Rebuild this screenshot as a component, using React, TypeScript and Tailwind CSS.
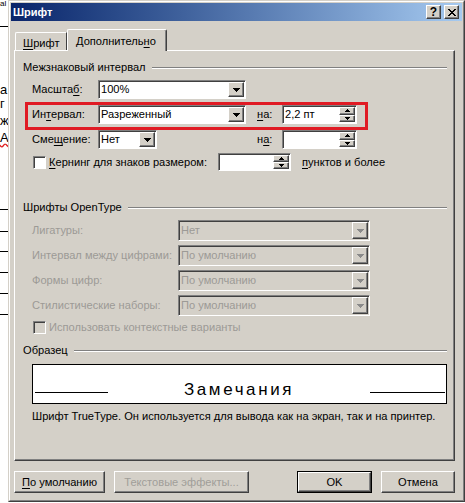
import React from 'react'

const raised =
  "bg-[#d4d0c8] border border-t-white border-l-white border-r-[#404040] border-b-[#404040] shadow-[inset_-1px_-1px_0_#808080]";
const sunken =
  "border border-t-[#808080] border-l-[#808080] border-r-white border-b-white shadow-[inset_1px_1px_0_#404040]";

const Down = ({color = "#000"}: {color?: string}) => (
  <svg width="7" height="4" viewBox="0 0 7 4" shapeRendering="crispEdges">
    <path d="M0 0h7v1H0zM1 1h5v1H1zM2 2h3v1H2zM3 3h1v1H3z" fill={color} />
  </svg>
)

const Up = () => (
  <svg width="5" height="3" viewBox="0 0 5 3" shapeRendering="crispEdges">
    <path d="M2 0h1v1H2zM1 1h3v1H1zM0 2h5v1H0z" fill="#000" />
  </svg>
)

const SmallDown = () => (
  <svg width="5" height="3" viewBox="0 0 5 3" shapeRendering="crispEdges">
    <path d="M0 0h5v1H0zM1 1h3v1H1zM2 2h1v1H2z" fill="#000" />
  </svg>
)

const Select = ({className, value, disabled}: {className: string; value: string; disabled?: boolean}) => (
  <div className={`${sunken} ${className} h-full p-[1px] flex ${disabled ? "bg-[#d4d0c8] text-[#9c9a96]" : "bg-white"}`}>
    <div className="flex-1 flex items-center pl-[1px] whitespace-nowrap overflow-hidden">{value}</div>
    <div className={`${raised} w-[16px] flex items-center justify-center`}>
      <Down color={disabled ? "#8a8a8a" : "#000"} />
    </div>
  </div>
)

const Spin = ({className, value}: {className: string; value?: string}) => (
  <div className={`${sunken} ${className} h-full p-[1px] flex bg-white`}>
    <div className="flex-1 flex items-center pl-[1px]">{value}</div>
    <div className="w-[16px] flex flex-col">
      <div className={`${raised} flex-1 flex items-center justify-center`}>
        <Up />
      </div>
      <div className={`${raised} flex-1 flex items-center justify-center`}>
        <SmallDown />
      </div>
    </div>
  </div>
)

const Section = ({title, className}: {title: string; className: string}) => (
  <div className={`flex items-center h-[13px] pl-[8px] pr-[7px] ${className}`}>
    <span className="whitespace-nowrap">{title}</span>
    <div className="flex-1 ml-[6px] border-t border-t-[#808080] border-b border-b-white" />
  </div>
)

const Check = ({disabled}: {disabled?: boolean}) => (
  <div className={`${sunken} w-[13px] h-[13px] ${disabled ? "bg-[#d4d0c8]" : "bg-white"}`} />
)

const u = "underline underline-offset-[2px] decoration-1"

export default function App() {
  return (
    <div className="w-[465px] h-[503px] flex bg-white overflow-hidden text-[11.1px] leading-[13px] text-black font-['Liberation_Sans',Arial,sans-serif]">
      {/* strip of the document behind the dialog */}
      <div className="w-[8px] shrink-0 flex flex-col overflow-hidden text-[13px] leading-[13px]">
        <div className="h-[7px] text-[8px] leading-[7px] whitespace-nowrap">аl</div>
        <div className="mt-[19px] h-px bg-black" />
        <div className="mt-[56px] h-[13px]">а</div>
        <div className="mt-[1px] h-[13px]">г</div>
        <div className="mt-[4px] h-[13px]">ж</div>
        <div className="mt-[4px] h-[13px] underline decoration-wavy decoration-[#e02020]">А</div>
        <div className="mt-[65px] h-px bg-black" />
        <div className="mt-[21px] h-px bg-black" />
        <div className="mt-[19px] h-px bg-black" />
        <div className="mt-[20px] h-px bg-black" />
        <div className="mt-[20px] h-px bg-black" />
        <div className="mt-[20px] h-px bg-black" />
      </div>

      {/* dialog */}
      <div className="w-[457px] h-[502px] shrink-0 border border-t-[#d4d0c8] border-l-[#d4d0c8] border-r-[#404040] border-b-[#404040] bg-[#d4d0c8]">
        <div className="h-full border border-t-white border-l-white border-r-[#808080] border-b-[#808080] p-[1px] flex flex-col">
          {/* title bar */}
          <div className="h-[18px] bg-linear-to-r from-[#0a246a] to-[#a6caf0] flex items-center pl-[2px] pr-[3px]">
            <span className="font-bold text-white text-[11px]">Шрифт</span>
            <div className="ml-auto flex gap-[3px]">
              <div className={`${raised} w-[15px] h-[14px] flex items-center justify-center font-bold text-[12px] leading-[12px]`}>?</div>
              <div className={`${raised} w-[15px] h-[14px] flex items-center justify-center`}>
                <svg width="8" height="7" viewBox="0 0 8 7" shapeRendering="crispEdges">
                  <path d="M0 0h2v1H0zM6 0h2v1H6zM1 1h2v1H1zM5 1h2v1H5zM2 2h4v1H2zM3 3h2v1H3zM2 4h4v1H2zM1 5h2v1H1zM5 5h2v1H5zM0 6h2v1H0zM6 6h2v1H6z" fill="#000" />
                </svg>
              </div>
            </div>
          </div>

          {/* tabs */}
          <div className="h-[29px] flex items-end pl-[4px] relative z-10">
            <div className="w-[52px] h-[18px] border-t border-l border-t-white border-l-white border-r border-r-[#404040] rounded-tl-[2px] pl-[7px] pt-[4px]">
              <u className={u}>Ш</u>рифт
            </div>
            <div className="w-[100px] h-[22px] -mb-[1px] bg-[#d4d0c8] border-t border-l border-t-white border-l-white border-r border-r-[#404040] shadow-[inset_-1px_0_0_#808080] rounded-tl-[2px] rounded-tr-[2px] pl-[8px] pt-[5px]">
              Дополнитель<u className={u}>н</u>о
            </div>
          </div>

          {/* panel */}
          <div className="ml-[3px] w-[441px] h-[411px] relative border border-t-white border-l-white border-r-[#404040] border-b-[#404040] shadow-[inset_-1px_-1px_0_#808080] flex flex-col">
            <Section title="Межзнаковый интервал" className="mt-[10px]" />

            <div className="flex items-center h-[19px] mt-[6px] pl-[17px]">
              <span className="w-[66px]">Масшта<u className={u}>б</u>:</span>
              <Select className="w-[148px]" value="100%" />
            </div>

            <div className="flex items-center h-[19px] mt-[6px] pl-[17px]">
              <span className="w-[66px]">Ин<u className={u}>т</u>ервал:</span>
              <Select className="w-[148px]" value="Разреженный" />
              <span className="ml-[11px] w-[25px]"><u className={u}>н</u>а:</span>
              <Spin className="w-[75px]" value="2,2 пт" />
            </div>

            <div className="flex items-center h-[19px] mt-[6px] pl-[17px]">
              <span className="w-[66px]">Сме<u className={u}>щ</u>ение:</span>
              <Select className="w-[59px]" value="Нет" />
              <span className="ml-[100px] w-[25px]">н<u className={u}>а</u>:</span>
              <Spin className="w-[75px]" />
            </div>

            <div className="flex items-center h-[18px] mt-[4px] pl-[18px]">
              <Check />
              <span className="ml-[3px] w-[169px]"><u className={u}>К</u>ернинг для знаков размером:</span>
              <Spin className="w-[73px]" />
              <span className="ml-[11px]"><u className={u}>п</u>унктов и более</span>
            </div>

            <Section title="Шрифты OpenType" className="mt-[30px]" />

            <div className="flex flex-col gap-[4px] mt-[6px] pl-[17px] text-[#9c9a96]">
              {[
                ["Лигатуры:", "Нет"],
                ["Интервал между цифрами:", "По умолчанию"],
                ["Формы цифр:", "По умолчанию"],
                ["Стилистические наборы:", "По умолчанию"],
              ].map(([label, value]) => (
                <div key={label} className="flex items-center h-[21px]">
                  <span className="w-[146px]">{label}</span>
                  <Select className="w-[192px]" value={value} disabled />
                </div>
              ))}
            </div>

            <div className="flex items-center h-[13px] mt-[5px] pl-[18px] text-[#9c9a96]">
              <Check disabled />
              <span className="ml-[3px]">Использовать контекстные варианты</span>
            </div>

            <Section title="Образец" className="mt-[10px]" />

            <div className="mt-[7px] ml-[17px] w-[415px] h-[40px] bg-white border border-black flex items-end pb-[10px]">
              <div className="ml-[2px] w-[73px] h-px bg-black" />
              <div className="flex-1 text-center text-[17px] leading-[17px] tracking-[2.6px] -mb-[5px]">Замечания</div>
              <div className="w-[75px] mr-[1px] h-px bg-black" />
            </div>

            <div className="mt-[6px] pl-[17px]">
              Шрифт TrueType. Он используется для вывода как на экран, так и на принтер.
            </div>

            {/* red annotation frame */}
            <div className="absolute left-[10px] top-[51px] w-[343px] h-[28px] border-[3px] border-[#e01b24]" />
          </div>

          {/* buttons */}
          <div className="mt-[10px] ml-[3px] flex h-[22px]">
            <div className={`${raised} w-[91px] flex items-center justify-center`}>
              <span><u className={u}>П</u>о умолчанию</span>
            </div>
            <div className={`${raised} ml-[9px] w-[135px] flex items-center justify-center text-[#a09e99]`}>
              Текстовые эффекты...
            </div>
            <div className="ml-[48px] w-[75px] border border-black">
              <div className={`${raised} h-full flex items-center justify-center`}>OK</div>
            </div>
            <div className={`${raised} ml-[9px] w-[74px] flex items-center justify-center`}>Отмена</div>
          </div>
        </div>
      </div>
    </div>
  )
}
